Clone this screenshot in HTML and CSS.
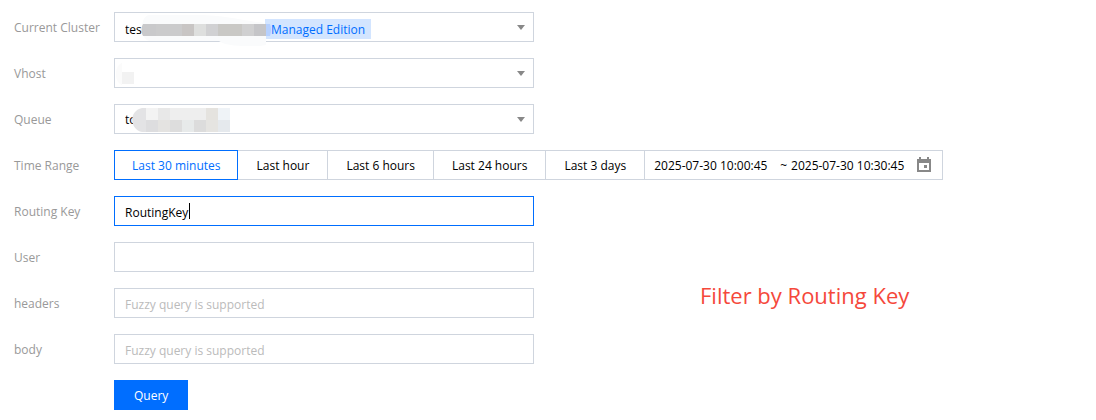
FILE: index.html
```html
<!DOCTYPE html>
<html lang="en">
<head>
    <meta charset="UTF-8">
    <meta name="viewport" content="width=device-width, initial-scale=1.0">
    <title>Message Query</title>
    <link rel="stylesheet" href="styles.css">
</head>
<body>
    <form class="query-form">
        <div class="row">
            <label for="cluster">Current Cluster</label>
            <div class="field">
                <select id="cluster" class="with-tag" name="cluster">
                    <option>tes</option>
                </select>
                <svg class="arrow" width="8" height="5" viewBox="0 0 8 5"><path d="M0 0h8L4 5z" fill="#888"/></svg>
                <span class="tag">Managed Edition</span>
                <svg class="mask" width="420" height="36" viewBox="0 0 420 36">
                    <path d="M36 3h50c20 0 38 4 56 7 8 0 10 2 10 5v18c-4 1-8 1-12 1-14 0-28 0-35-5H36C30 28 28 22 28 16S30 3 36 3z" fill="#fafbfc"/>
                    <path d="M29 12h13v12H29c-2-3-2-9 0-12z" fill="#c9c9cb"/>
                    <path d="M42 12h26v12H42z" fill="#cbcbcc"/>
                    <path d="M68 12h12v12H68z" fill="#c8c5c4"/>
                    <path d="M80 12h12v12H80z" fill="#dedfde"/>
                    <path d="M92 12h12v12H92z" fill="#d1d1d3"/>
                    <path d="M104 12h24v12h-24z" fill="#c9c8c5"/>
                    <path d="M128 12h12v12h-12z" fill="#d0d0d1"/>
                    <path d="M140 12h12v12h-12z" fill="#c5c5c8"/>
                    <path d="M152 12h4q2 6 0 12h-4z" fill="#b5d0ff"/>
                </svg>
            </div>
        </div>
        <div class="row">
            <label for="vhost">Vhost</label>
            <div class="field">
                <select id="vhost" name="vhost">
                    <option></option>
                </select>
                <svg class="arrow" width="8" height="5" viewBox="0 0 8 5"><path d="M0 0h8L4 5z" fill="#888"/></svg>
                <svg class="mask" width="420" height="36" viewBox="0 0 420 36">
                    <path d="M8 5v22C0 25 0 7 8 5z" fill="#fbfbfb"/>
                    <path d="M8 14h12v12H8z" fill="#f2f2f2"/>
                </svg>
            </div>
        </div>
        <div class="row">
            <label for="queue">Queue</label>
            <div class="field">
                <select id="queue" name="queue">
                    <option>to</option>
                </select>
                <svg class="arrow" width="8" height="5" viewBox="0 0 8 5"><path d="M0 0h8L4 5z" fill="#888"/></svg>
                <svg class="mask" width="420" height="36" viewBox="0 0 420 36">
                    <path d="M32 4v24h-4c-12-2-14-21 0-24z" fill="#e3e3e5"/>
                    <path d="M32 4h12v12H32z" fill="#f3f3f3"/>
                    <path d="M44 4h12v12H44z" fill="#e8e8e8"/>
                    <path d="M56 4h36v12H56z" fill="#eeeeee"/>
                    <path d="M92 4h12v12H92z" fill="#e5e3df"/>
                    <path d="M104 4h12v12h-12z" fill="#eff3f7"/>
                    <path d="M32 16h12v12H32z" fill="#dddddf"/>
                    <path d="M44 16h12v12H44z" fill="#e4e3e1"/>
                    <path d="M56 16h12v12H56z" fill="#dddddd"/>
                    <path d="M68 16h12v12H68z" fill="#e7eaea"/>
                    <path d="M80 16h12v12H80z" fill="#dcdcdc"/>
                    <path d="M92 16h12v12H92z" fill="#e5e4e1"/>
                    <path d="M104 16h12v12h-12z" fill="#e5e9ed"/>
                </svg>
            </div>
        </div>
        <div class="row">
            <label for="from">Time Range</label>
            <div class="time-range">
                <button type="button" class="active">Last 30 minutes</button>
                <button type="button">Last hour</button>
                <button type="button">Last 6 hours</button>
                <button type="button">Last 24 hours</button>
                <button type="button">Last 3 days</button>
                <div class="dates">
                    <input type="text" id="from" name="from" value="2025-07-30 10:00:45" aria-label="Start time">
                    <span>~</span>
                    <input type="text" id="to" name="to" value="2025-07-30 10:30:45" aria-label="End time">
                    <svg width="14" height="16" viewBox="0 0 14 16">
                        <path d="M2 0h2v2h6V0h2v2h2v13H0V2h2zM2 6v7h10V6z" fill="#888" fill-rule="evenodd"/>
                        <path d="M7 8h3v3H7z" fill="#888"/>
                    </svg>
                </div>
            </div>
        </div>
        <div class="row">
            <label for="routingKey">Routing Key</label>
            <div class="field">
                <input type="text" id="routingKey" class="focused" name="routingKey" value="RoutingKey">
                <span class="caret"></span>
            </div>
        </div>
        <div class="group">
            <div class="group-rows">
                <div class="row">
                    <label for="user">User</label>
                    <div class="field"><input type="text" id="user" name="user"></div>
                </div>
                <div class="row">
                    <label for="headers">headers</label>
                    <div class="field"><input type="text" id="headers" name="headers" placeholder="Fuzzy query is supported"></div>
                </div>
                <div class="row">
                    <label for="body">body</label>
                    <div class="field"><input type="text" id="body" name="body" placeholder="Fuzzy query is supported"></div>
                </div>
            </div>
            <p class="note">Filter by Routing Key</p>
        </div>
        <div class="actions">
            <button type="submit" class="query">Query</button>
        </div>
    </form>
</body>
</html>
```

FILE: styles.css
```css
* {
    box-sizing: border-box;
}

body {
    margin: 0;
    background-color: #fff;
    color: #000;
    font-family: "Open Sans", "Noto Sans", sans-serif;
    font-size: 12px;
    line-height: 18px;
}

.query-form,
.group-rows {
    display: flex;
    flex-direction: column;
    gap: 16px;
}

.query-form {
    padding: 12px 14px 10px;
}

.row {
    display: flex;
    align-items: center;
}

label {
    flex: 0 0 100px;
    padding-top: 2px;
    color: #999;
}

.field {
    position: relative;
    flex: 0 1 420px;
    height: 30px;
}

input,
select,
button {
    font: inherit;
    color: inherit;
    border-radius: 0;
}

.field input,
.field select {
    display: block;
    width: 100%;
    height: 30px;
    padding: 2px 10px 0;
    border: 1px solid #cfd5de;
    background-color: #fff;
    outline: none;
    appearance: none;
}

.field select.with-tag {
    padding-top: 6px;
}

.field input.focused {
    border-color: #006eff;
}

::placeholder {
    color: #bbb;
    opacity: 1;
}

.arrow {
    position: absolute;
    top: 13px;
    right: 9px;
}

.mask {
    position: absolute;
    top: 0;
    left: 0;
    pointer-events: none;
}

.tag {
    position: absolute;
    top: 7px;
    left: 151px;
    padding: 2px 6px 0;
    background-color: #d3e5ff;
    color: #006eff;
}

.caret {
    position: absolute;
    top: 7px;
    left: 75px;
    width: 1px;
    height: 16px;
    background-color: #000;
}

.time-range {
    display: flex;
}

.time-range button {
    height: 30px;
    margin-right: -1px;
    padding: 2px 18px 0;
    border: 1px solid #cfd5de;
    background-color: #fff;
    white-space: nowrap;
    cursor: pointer;
}

.time-range button.active {
    position: relative;
    padding: 2px 17px 0;
    border-color: #006eff;
    color: #006eff;
}

.dates {
    display: flex;
    align-items: center;
    gap: 4px;
    height: 30px;
    padding: 0 11px 0 9px;
    border: 1px solid #cfd5de;
}

.dates span {
    padding-top: 2px;
}

.dates input {
    width: 122px;
    padding: 2px 0 0;
    border: none;
    outline: none;
}

.group {
    display: flex;
}

.group-rows {
    flex: 0 1 520px;
}

.note {
    margin: 37px 0 0 166px;
    color: #f5483b;
    font-size: 22px;
    line-height: 32px;
}

.actions {
    padding-left: 100px;
}

.query {
    height: 30px;
    padding: 2px 20px 0;
    border: none;
    background-color: #006eff;
    color: #fff;
    cursor: pointer;
}
```
